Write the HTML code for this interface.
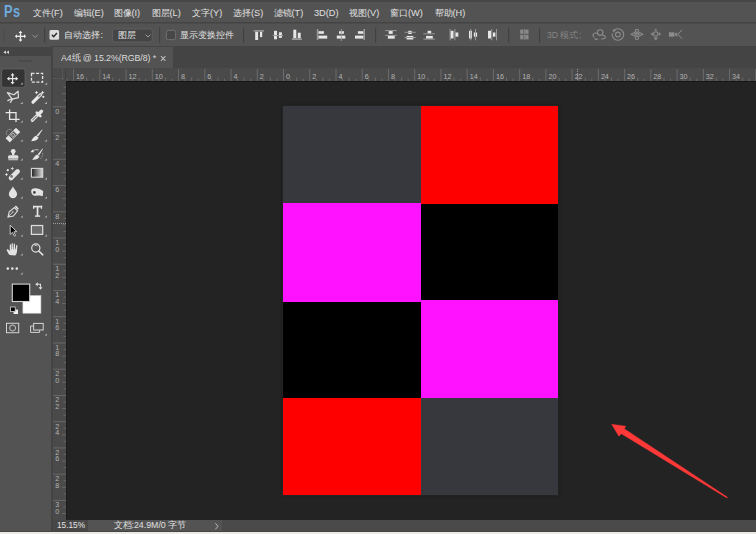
<!DOCTYPE html>
<html><head><meta charset="utf-8">
<style>
html,body{margin:0;padding:0;width:756px;height:534px;overflow:hidden;background:#232323;font-family:"Liberation Sans",sans-serif;}
.a{position:absolute;}
.mi{top:6.5px;font-size:9.2px;line-height:12px;color:#e0e0e0;font-weight:500;white-space:nowrap;}
.ot{top:30px;font-size:8.7px;line-height:11px;color:#e2e2e2;font-weight:500;white-space:nowrap;}
.rl{font-family:"Liberation Sans",sans-serif;font-size:7.2px;fill:#b4b4b4;}
</style></head><body>
<!-- top strip + menu bar -->
<div class="a" style="left:0;top:0;width:756px;height:2px;background:#474747"></div>
<div class="a" style="left:0;top:2px;width:756px;height:20px;background:#535353"></div>
<div class="a" style="left:0;top:22px;width:756px;height:1px;background:#444"></div>
<div class="a" style="left:0;top:23px;width:756px;height:1px;background:#4b4b4b"></div>
<!-- options bar -->
<div class="a" style="left:0;top:24px;width:756px;height:22px;background:#535353"></div>
<div class="a" style="left:0;top:46px;width:756px;height:22px;background:#444"></div>
<!-- tab -->
<div class="a" style="left:53px;top:47px;width:120px;height:21px;background:#535353"></div>
<!-- toolbar panel -->
<div class="a" style="left:0;top:46px;width:51px;height:485px;background:#535353"></div>
<div class="a" style="left:0;top:47px;width:51px;height:9px;background:#444"></div>
<div class="a" style="left:51px;top:46px;width:2px;height:485px;background:#444"></div>
<!-- rulers -->
<div class="a" style="left:53px;top:68px;width:703px;height:13px;background:#4a4a4a"></div>
<div class="a" style="left:53px;top:68px;width:13px;height:452px;background:#4a4a4a"></div>
<svg class="a" style="left:53px;top:69px" width="13" height="12"><path d="M9.5 0 L9.5 11.5 M0 9.5 L12 9.5" stroke="#666" stroke-width="0.8" stroke-dasharray="1 1"/><rect x="12.4" y="0" width="0.6" height="12" fill="#3c3c3c"/></svg>
<svg class="a" style="left:53px;top:69px" width="703" height="12"><rect x="13.52" y="9.7" width="1" height="2.3000000000000007" fill="#6a6a6a"/><rect x="20.08" y="0" width="1" height="12" fill="#6a6a6a"/><text x="23.08" y="9.7" class="rl">16</text><rect x="26.64" y="9.7" width="1" height="2.3000000000000007" fill="#6a6a6a"/><rect x="33.20" y="8.5" width="1" height="3.5" fill="#6a6a6a"/><rect x="39.76" y="9.7" width="1" height="2.3000000000000007" fill="#6a6a6a"/><rect x="46.32" y="0" width="1" height="12" fill="#6a6a6a"/><text x="49.32" y="9.7" class="rl">14</text><rect x="52.88" y="9.7" width="1" height="2.3000000000000007" fill="#6a6a6a"/><rect x="59.44" y="8.5" width="1" height="3.5" fill="#6a6a6a"/><rect x="66.00" y="9.7" width="1" height="2.3000000000000007" fill="#6a6a6a"/><rect x="72.56" y="0" width="1" height="12" fill="#6a6a6a"/><text x="75.56" y="9.7" class="rl">12</text><rect x="79.12" y="9.7" width="1" height="2.3000000000000007" fill="#6a6a6a"/><rect x="85.68" y="8.5" width="1" height="3.5" fill="#6a6a6a"/><rect x="92.24" y="9.7" width="1" height="2.3000000000000007" fill="#6a6a6a"/><rect x="98.80" y="0" width="1" height="12" fill="#6a6a6a"/><text x="101.80" y="9.7" class="rl">10</text><rect x="105.36" y="9.7" width="1" height="2.3000000000000007" fill="#6a6a6a"/><rect x="111.92" y="8.5" width="1" height="3.5" fill="#6a6a6a"/><rect x="118.48" y="9.7" width="1" height="2.3000000000000007" fill="#6a6a6a"/><rect x="125.04" y="0" width="1" height="12" fill="#6a6a6a"/><text x="128.04" y="9.7" class="rl">8</text><rect x="131.60" y="9.7" width="1" height="2.3000000000000007" fill="#6a6a6a"/><rect x="138.16" y="8.5" width="1" height="3.5" fill="#6a6a6a"/><rect x="144.72" y="9.7" width="1" height="2.3000000000000007" fill="#6a6a6a"/><rect x="151.28" y="0" width="1" height="12" fill="#6a6a6a"/><text x="154.28" y="9.7" class="rl">6</text><rect x="157.84" y="9.7" width="1" height="2.3000000000000007" fill="#6a6a6a"/><rect x="164.40" y="8.5" width="1" height="3.5" fill="#6a6a6a"/><rect x="170.96" y="9.7" width="1" height="2.3000000000000007" fill="#6a6a6a"/><rect x="177.52" y="0" width="1" height="12" fill="#6a6a6a"/><text x="180.52" y="9.7" class="rl">4</text><rect x="184.08" y="9.7" width="1" height="2.3000000000000007" fill="#6a6a6a"/><rect x="190.64" y="8.5" width="1" height="3.5" fill="#6a6a6a"/><rect x="197.20" y="9.7" width="1" height="2.3000000000000007" fill="#6a6a6a"/><rect x="203.76" y="0" width="1" height="12" fill="#6a6a6a"/><text x="206.76" y="9.7" class="rl">2</text><rect x="210.32" y="9.7" width="1" height="2.3000000000000007" fill="#6a6a6a"/><rect x="216.88" y="8.5" width="1" height="3.5" fill="#6a6a6a"/><rect x="223.44" y="9.7" width="1" height="2.3000000000000007" fill="#6a6a6a"/><rect x="230.00" y="0" width="1" height="12" fill="#6a6a6a"/><text x="233.00" y="9.7" class="rl">0</text><rect x="236.56" y="9.7" width="1" height="2.3000000000000007" fill="#6a6a6a"/><rect x="243.12" y="8.5" width="1" height="3.5" fill="#6a6a6a"/><rect x="249.68" y="9.7" width="1" height="2.3000000000000007" fill="#6a6a6a"/><rect x="256.24" y="0" width="1" height="12" fill="#6a6a6a"/><text x="259.24" y="9.7" class="rl">2</text><rect x="262.80" y="9.7" width="1" height="2.3000000000000007" fill="#6a6a6a"/><rect x="269.36" y="8.5" width="1" height="3.5" fill="#6a6a6a"/><rect x="275.92" y="9.7" width="1" height="2.3000000000000007" fill="#6a6a6a"/><rect x="282.48" y="0" width="1" height="12" fill="#6a6a6a"/><text x="285.48" y="9.7" class="rl">4</text><rect x="289.04" y="9.7" width="1" height="2.3000000000000007" fill="#6a6a6a"/><rect x="295.60" y="8.5" width="1" height="3.5" fill="#6a6a6a"/><rect x="302.16" y="9.7" width="1" height="2.3000000000000007" fill="#6a6a6a"/><rect x="308.72" y="0" width="1" height="12" fill="#6a6a6a"/><text x="311.72" y="9.7" class="rl">6</text><rect x="315.28" y="9.7" width="1" height="2.3000000000000007" fill="#6a6a6a"/><rect x="321.84" y="8.5" width="1" height="3.5" fill="#6a6a6a"/><rect x="328.40" y="9.7" width="1" height="2.3000000000000007" fill="#6a6a6a"/><rect x="334.96" y="0" width="1" height="12" fill="#6a6a6a"/><text x="337.96" y="9.7" class="rl">8</text><rect x="341.52" y="9.7" width="1" height="2.3000000000000007" fill="#6a6a6a"/><rect x="348.08" y="8.5" width="1" height="3.5" fill="#6a6a6a"/><rect x="354.64" y="9.7" width="1" height="2.3000000000000007" fill="#6a6a6a"/><rect x="361.20" y="0" width="1" height="12" fill="#6a6a6a"/><text x="364.20" y="9.7" class="rl">10</text><rect x="367.76" y="9.7" width="1" height="2.3000000000000007" fill="#6a6a6a"/><rect x="374.32" y="8.5" width="1" height="3.5" fill="#6a6a6a"/><rect x="380.88" y="9.7" width="1" height="2.3000000000000007" fill="#6a6a6a"/><rect x="387.44" y="0" width="1" height="12" fill="#6a6a6a"/><text x="390.44" y="9.7" class="rl">12</text><rect x="394.00" y="9.7" width="1" height="2.3000000000000007" fill="#6a6a6a"/><rect x="400.56" y="8.5" width="1" height="3.5" fill="#6a6a6a"/><rect x="407.12" y="9.7" width="1" height="2.3000000000000007" fill="#6a6a6a"/><rect x="413.68" y="0" width="1" height="12" fill="#6a6a6a"/><text x="416.68" y="9.7" class="rl">14</text><rect x="420.24" y="9.7" width="1" height="2.3000000000000007" fill="#6a6a6a"/><rect x="426.80" y="8.5" width="1" height="3.5" fill="#6a6a6a"/><rect x="433.36" y="9.7" width="1" height="2.3000000000000007" fill="#6a6a6a"/><rect x="439.92" y="0" width="1" height="12" fill="#6a6a6a"/><text x="442.92" y="9.7" class="rl">16</text><rect x="446.48" y="9.7" width="1" height="2.3000000000000007" fill="#6a6a6a"/><rect x="453.04" y="8.5" width="1" height="3.5" fill="#6a6a6a"/><rect x="459.60" y="9.7" width="1" height="2.3000000000000007" fill="#6a6a6a"/><rect x="466.16" y="0" width="1" height="12" fill="#6a6a6a"/><text x="469.16" y="9.7" class="rl">18</text><rect x="472.72" y="9.7" width="1" height="2.3000000000000007" fill="#6a6a6a"/><rect x="479.28" y="8.5" width="1" height="3.5" fill="#6a6a6a"/><rect x="485.84" y="9.7" width="1" height="2.3000000000000007" fill="#6a6a6a"/><rect x="492.40" y="0" width="1" height="12" fill="#6a6a6a"/><text x="495.40" y="9.7" class="rl">20</text><rect x="498.96" y="9.7" width="1" height="2.3000000000000007" fill="#6a6a6a"/><rect x="505.52" y="8.5" width="1" height="3.5" fill="#6a6a6a"/><rect x="512.08" y="9.7" width="1" height="2.3000000000000007" fill="#6a6a6a"/><rect x="518.64" y="0" width="1" height="12" fill="#6a6a6a"/><text x="521.64" y="9.7" class="rl">22</text><rect x="525.20" y="9.7" width="1" height="2.3000000000000007" fill="#6a6a6a"/><rect x="531.76" y="8.5" width="1" height="3.5" fill="#6a6a6a"/><rect x="538.32" y="9.7" width="1" height="2.3000000000000007" fill="#6a6a6a"/><rect x="544.88" y="0" width="1" height="12" fill="#6a6a6a"/><text x="547.88" y="9.7" class="rl">24</text><rect x="551.44" y="9.7" width="1" height="2.3000000000000007" fill="#6a6a6a"/><rect x="558.00" y="8.5" width="1" height="3.5" fill="#6a6a6a"/><rect x="564.56" y="9.7" width="1" height="2.3000000000000007" fill="#6a6a6a"/><rect x="571.12" y="0" width="1" height="12" fill="#6a6a6a"/><text x="574.12" y="9.7" class="rl">26</text><rect x="577.68" y="9.7" width="1" height="2.3000000000000007" fill="#6a6a6a"/><rect x="584.24" y="8.5" width="1" height="3.5" fill="#6a6a6a"/><rect x="590.80" y="9.7" width="1" height="2.3000000000000007" fill="#6a6a6a"/><rect x="597.36" y="0" width="1" height="12" fill="#6a6a6a"/><text x="600.36" y="9.7" class="rl">28</text><rect x="603.92" y="9.7" width="1" height="2.3000000000000007" fill="#6a6a6a"/><rect x="610.48" y="8.5" width="1" height="3.5" fill="#6a6a6a"/><rect x="617.04" y="9.7" width="1" height="2.3000000000000007" fill="#6a6a6a"/><rect x="623.60" y="0" width="1" height="12" fill="#6a6a6a"/><text x="626.60" y="9.7" class="rl">30</text><rect x="630.16" y="9.7" width="1" height="2.3000000000000007" fill="#6a6a6a"/><rect x="636.72" y="8.5" width="1" height="3.5" fill="#6a6a6a"/><rect x="643.28" y="9.7" width="1" height="2.3000000000000007" fill="#6a6a6a"/><rect x="649.84" y="0" width="1" height="12" fill="#6a6a6a"/><text x="652.84" y="9.7" class="rl">32</text><rect x="656.40" y="9.7" width="1" height="2.3000000000000007" fill="#6a6a6a"/><rect x="662.96" y="8.5" width="1" height="3.5" fill="#6a6a6a"/><rect x="669.52" y="9.7" width="1" height="2.3000000000000007" fill="#6a6a6a"/><rect x="676.08" y="0" width="1" height="12" fill="#6a6a6a"/><text x="679.08" y="9.7" class="rl">34</text><rect x="682.64" y="9.7" width="1" height="2.3000000000000007" fill="#6a6a6a"/><rect x="689.20" y="8.5" width="1" height="3.5" fill="#6a6a6a"/><rect x="695.76" y="9.7" width="1" height="2.3000000000000007" fill="#6a6a6a"/><rect x="702.32" y="0" width="1" height="12" fill="#6a6a6a"/><text x="705.32" y="9.7" class="rl">36</text></svg>
<svg class="a" style="left:53px;top:68px" width="13" height="451"><rect x="10.5" y="18.62" width="2.5" height="1" fill="#686868"/><rect x="9" y="25.18" width="4" height="1" fill="#686868"/><rect x="10.5" y="31.74" width="2.5" height="1" fill="#686868"/><rect x="0" y="38.30" width="13" height="1" fill="#686868"/><text x="2.2" y="45.70" class="rl">0</text><rect x="10.5" y="44.86" width="2.5" height="1" fill="#686868"/><rect x="9" y="51.42" width="4" height="1" fill="#686868"/><rect x="10.5" y="57.98" width="2.5" height="1" fill="#686868"/><rect x="0" y="64.54" width="13" height="1" fill="#686868"/><text x="2.2" y="71.94" class="rl">2</text><rect x="10.5" y="71.10" width="2.5" height="1" fill="#686868"/><rect x="9" y="77.66" width="4" height="1" fill="#686868"/><rect x="10.5" y="84.22" width="2.5" height="1" fill="#686868"/><rect x="0" y="90.78" width="13" height="1" fill="#686868"/><text x="2.2" y="98.18" class="rl">4</text><rect x="10.5" y="97.34" width="2.5" height="1" fill="#686868"/><rect x="9" y="103.90" width="4" height="1" fill="#686868"/><rect x="10.5" y="110.46" width="2.5" height="1" fill="#686868"/><rect x="0" y="117.02" width="13" height="1" fill="#686868"/><text x="2.2" y="124.42" class="rl">6</text><rect x="10.5" y="123.58" width="2.5" height="1" fill="#686868"/><rect x="9" y="130.14" width="4" height="1" fill="#686868"/><rect x="10.5" y="136.70" width="2.5" height="1" fill="#686868"/><rect x="0" y="143.26" width="13" height="1" fill="#686868"/><text x="2.2" y="150.66" class="rl">8</text><rect x="10.5" y="149.82" width="2.5" height="1" fill="#686868"/><rect x="9" y="156.38" width="4" height="1" fill="#686868"/><rect x="10.5" y="162.94" width="2.5" height="1" fill="#686868"/><rect x="0" y="169.50" width="13" height="1" fill="#686868"/><text x="2.2" y="176.90" class="rl">1</text><text x="2.2" y="183.50" class="rl">0</text><rect x="10.5" y="176.06" width="2.5" height="1" fill="#686868"/><rect x="9" y="182.62" width="4" height="1" fill="#686868"/><rect x="10.5" y="189.18" width="2.5" height="1" fill="#686868"/><rect x="0" y="195.74" width="13" height="1" fill="#686868"/><text x="2.2" y="203.14" class="rl">1</text><text x="2.2" y="209.74" class="rl">2</text><rect x="10.5" y="202.30" width="2.5" height="1" fill="#686868"/><rect x="9" y="208.86" width="4" height="1" fill="#686868"/><rect x="10.5" y="215.42" width="2.5" height="1" fill="#686868"/><rect x="0" y="221.98" width="13" height="1" fill="#686868"/><text x="2.2" y="229.38" class="rl">1</text><text x="2.2" y="235.98" class="rl">4</text><rect x="10.5" y="228.54" width="2.5" height="1" fill="#686868"/><rect x="9" y="235.10" width="4" height="1" fill="#686868"/><rect x="10.5" y="241.66" width="2.5" height="1" fill="#686868"/><rect x="0" y="248.22" width="13" height="1" fill="#686868"/><text x="2.2" y="255.62" class="rl">1</text><text x="2.2" y="262.22" class="rl">6</text><rect x="10.5" y="254.78" width="2.5" height="1" fill="#686868"/><rect x="9" y="261.34" width="4" height="1" fill="#686868"/><rect x="10.5" y="267.90" width="2.5" height="1" fill="#686868"/><rect x="0" y="274.46" width="13" height="1" fill="#686868"/><text x="2.2" y="281.86" class="rl">1</text><text x="2.2" y="288.46" class="rl">8</text><rect x="10.5" y="281.02" width="2.5" height="1" fill="#686868"/><rect x="9" y="287.58" width="4" height="1" fill="#686868"/><rect x="10.5" y="294.14" width="2.5" height="1" fill="#686868"/><rect x="0" y="300.70" width="13" height="1" fill="#686868"/><text x="2.2" y="308.10" class="rl">2</text><text x="2.2" y="314.70" class="rl">0</text><rect x="10.5" y="307.26" width="2.5" height="1" fill="#686868"/><rect x="9" y="313.82" width="4" height="1" fill="#686868"/><rect x="10.5" y="320.38" width="2.5" height="1" fill="#686868"/><rect x="0" y="326.94" width="13" height="1" fill="#686868"/><text x="2.2" y="334.34" class="rl">2</text><text x="2.2" y="340.94" class="rl">2</text><rect x="10.5" y="333.50" width="2.5" height="1" fill="#686868"/><rect x="9" y="340.06" width="4" height="1" fill="#686868"/><rect x="10.5" y="346.62" width="2.5" height="1" fill="#686868"/><rect x="0" y="353.18" width="13" height="1" fill="#686868"/><text x="2.2" y="360.58" class="rl">2</text><text x="2.2" y="367.18" class="rl">4</text><rect x="10.5" y="359.74" width="2.5" height="1" fill="#686868"/><rect x="9" y="366.30" width="4" height="1" fill="#686868"/><rect x="10.5" y="372.86" width="2.5" height="1" fill="#686868"/><rect x="0" y="379.42" width="13" height="1" fill="#686868"/><text x="2.2" y="386.82" class="rl">2</text><text x="2.2" y="393.42" class="rl">6</text><rect x="10.5" y="385.98" width="2.5" height="1" fill="#686868"/><rect x="9" y="392.54" width="4" height="1" fill="#686868"/><rect x="10.5" y="399.10" width="2.5" height="1" fill="#686868"/><rect x="0" y="405.66" width="13" height="1" fill="#686868"/><text x="2.2" y="413.06" class="rl">2</text><text x="2.2" y="419.66" class="rl">8</text><rect x="10.5" y="412.22" width="2.5" height="1" fill="#686868"/><rect x="9" y="418.78" width="4" height="1" fill="#686868"/><rect x="10.5" y="425.34" width="2.5" height="1" fill="#686868"/><rect x="0" y="431.90" width="13" height="1" fill="#686868"/><text x="2.2" y="439.30" class="rl">3</text><text x="2.2" y="445.90" class="rl">0</text><rect x="10.5" y="438.46" width="2.5" height="1" fill="#686868"/><rect x="9" y="445.02" width="4" height="1" fill="#686868"/></svg>
<svg class="a" style="left:576px;top:69px" width="3" height="12"><path d="M1.5 0 L1.5 13" stroke="#a8a8c0" stroke-width="0.8" stroke-dasharray="1 1"/></svg>
<svg class="a" style="left:53px;top:222px" width="13" height="3"><path d="M0 1.5 L13 1.5" stroke="#b4b4b4" stroke-width="0.8" stroke-dasharray="1 1"/></svg>
<!-- canvas -->
<div class="a" style="left:66px;top:81px;width:690px;height:438px;background:#232323"></div>
<div class="a" style="left:66px;top:81px;width:690px;height:1px;background:#161616"></div>
<div class="a" style="left:66px;top:81px;width:1px;height:438px;background:#1c1c1c"></div>
<!-- document -->
<div class="a" style="left:282px;top:105px;width:277px;height:391px;box-shadow:0 0 2px #1a1a1a"></div>
<div class="a" style="left:283px;top:106px;width:138px;height:97px;background:#37383d"></div>
<div class="a" style="left:283px;top:203px;width:138px;height:99px;background:#ff12ff"></div>
<div class="a" style="left:283px;top:302px;width:138px;height:96px;background:#000"></div>
<div class="a" style="left:283px;top:398px;width:138px;height:97px;background:#ff0000"></div>
<div class="a" style="left:421px;top:106px;width:137px;height:98px;background:#ff0000"></div>
<div class="a" style="left:421px;top:204px;width:137px;height:96px;background:#000"></div>
<div class="a" style="left:421px;top:300px;width:137px;height:98px;background:#ff12ff"></div>
<div class="a" style="left:421px;top:398px;width:137px;height:97px;background:#37383d"></div>
<svg class="a" style="left:0;top:0" width="756" height="534"><path d="M611.6 424.3 L625.8 426.2 L624.3 428.8 L727.5 497.2 L726.9 498.0 L621.3 433.7 L618.9 436.2Z" fill="#ff3838" stroke="#ff3838" stroke-width="0.4" stroke-linejoin="round"/></svg>
<!-- status bar -->
<div class="a" style="left:53px;top:519.5px;width:703px;height:11.5px;background:#4a4a4a"></div>
<div class="a" style="left:88px;top:519.5px;width:134px;height:11.5px;background:#535353"></div>
<div class="a" style="left:53px;top:519.5px;width:35px;height:11.5px;background:#474747"></div>
<div class="a" style="left:56.5px;top:519px;font-size:9.5px;line-height:12px;color:#e4e4e4;transform:scaleX(0.87);transform-origin:0 0;white-space:nowrap">15.15%</div>
<div class="a" style="left:113.5px;top:519.5px;font-size:8.8px;line-height:11px;color:#e0e0e0;font-weight:500;white-space:nowrap">文档:24.9M/0 字节</div>
<svg class="a" style="left:213px;top:520px" width="8" height="10"><path d="M2.4 3.3 L5 6.3 L2.4 9.3" fill="none" stroke="#bdbdbd" stroke-width="1"/></svg>
<div class="a" style="left:60.5px;top:51px;font-size:9.8px;letter-spacing:-0.1px;transform:scaleX(0.9);transform-origin:0 0;line-height:13px;color:#dcdcdc;white-space:nowrap">A4纸 @ 15.2%(RGB/8) *</div>
<svg class="a" style="left:159px;top:54px" width="9" height="9"><path d="M2 2.2 L6.4 6.8 M6.4 2.2 L2 6.8" fill="none" stroke="#bcbcbc" stroke-width="1.1"/></svg>
<div class="a" style="left:0;top:531px;width:756px;height:1px;background:#444"></div>
<div class="a" style="left:0;top:532px;width:756px;height:2px;background:#ecebe6"></div>

<!-- toolbar -->
<svg class="a" style="left:0;top:0" width="52" height="345">
 <!-- header collapse -->
 <path d="M6 50.6 L3.3 52.3 L6 54 Z M9 50.6 L6.3 52.3 L9 54 Z" fill="#d0d0d0"/>
 <path d="M18 60.8 L32.6 60.8" stroke="#464646" stroke-width="1.8" stroke-dasharray="1.6 0.8"/>
 <!-- selected -->
 <rect x="1.4" y="68.4" width="24" height="19.4" rx="2.4" fill="none" stroke="#5c5c5c" stroke-width="0.9"/><rect x="2.2" y="69.4" width="22.2" height="17.4" rx="1.6" fill="#343434"/>
 <!-- triangles -->
 <g fill="#b0b0b0">
  <path d="M22.8 82.6 L22.8 84.6 L20.3 84.6Z"/><path d="M47.2 82.5 L47.2 84.7 L44.7 84.7Z"/>
  <path d="M22.8 101.8 L22.8 104 L20.3 104Z"/><path d="M47 101.8 L47 104 L44.5 104Z"/>
  <path d="M22.8 120.5 L22.8 122.6 L20.3 122.6Z"/><path d="M47 120.5 L47 122.6 L44.5 122.6Z"/>
  <path d="M22.8 139.5 L22.8 141.6 L20.3 141.6Z"/><path d="M47 139.5 L47 141.6 L44.5 141.6Z"/>
  <path d="M22.8 158.5 L22.8 160.6 L20.3 160.6Z"/><path d="M47 158.5 L47 160.6 L44.5 160.6Z"/>
  <path d="M22.8 177.5 L22.8 179.6 L20.3 179.6Z"/><path d="M47 177.5 L47 179.6 L44.5 179.6Z"/>
  <path d="M22.8 196.5 L22.8 198.6 L20.3 198.6Z"/><path d="M47 196.5 L47 198.6 L44.5 198.6Z"/>
  <path d="M22.8 215.5 L22.8 217.6 L20.3 217.6Z"/><path d="M47 215.5 L47 217.6 L44.5 217.6Z"/>
  <path d="M22.8 234.5 L22.8 236.6 L20.3 236.6Z"/><path d="M47 234.5 L47 236.6 L44.5 236.6Z"/>
  <path d="M22.8 253.5 L22.8 255.6 L20.3 255.6Z"/>
  <path d="M22.8 272.5 L22.8 274.6 L20.3 274.6Z"/>
  <path d="M47 333.5 L47 335.6 L44.5 335.6Z"/>
 </g>
  <!-- move -->
 <g fill="#e8e8e8">
  <rect x="8.8" y="78.05" width="7.5" height="1.2"/><rect x="11.95" y="74.9" width="1.2" height="7.5"/>
  <path d="M12.55 72.9 L14.6 75.4 L10.5 75.4Z M12.55 84.4 L14.6 81.9 L10.5 81.9Z M6.9 78.65 L9.4 76.6 L9.4 80.7Z M18.2 78.65 L15.7 76.6 L15.7 80.7Z"/>
 </g>
 <!-- marquee -->
 <rect x="31.5" y="73.4" width="11.1" height="8.7" fill="none" stroke="#e6e6e6" stroke-width="1.3" stroke-dasharray="3 1.6"/>
 <!-- lasso polygonal -->
 <g fill="none" stroke="#e0e0e0" stroke-width="1.2" stroke-linejoin="round" stroke-linecap="round">
  <path d="M7.4 92.6 L14 94.8 L18.1 91.2 L18.4 97.6 L12.2 99.2 Z"/>
  <path d="M11.8 98.8 L7.8 100.6 M12.4 99.2 L10.4 102.4"/>
 </g>
 <!-- magic wand -->
 <g>
  <path d="M33 102.2 L40.6 94.6" stroke="#e8e8e8" stroke-width="3.2" stroke-linecap="round"/>
  <path d="M38.8 96.4 L40.4 94.8" stroke="#6a6a6a" stroke-width="1.1" stroke-linecap="round"/>
  <g fill="#e8e8e8">
   <path d="M36.5 90.8 L37.2 92.1 L38.5 92.6 L37.2 93.1 L36.5 94.4 L35.8 93.1 L34.5 92.6 L35.8 92.1Z"/>
   <path d="M42.6 90.8 L43.3 92.1 L44.6 92.6 L43.3 93.1 L42.6 94.4 L41.9 93.1 L40.6 92.6 L41.9 92.1Z"/>
   <circle cx="43.3" cy="96.8" r="1.1"/>
  </g>
 </g>
 <!-- crop -->
 <g fill="none" stroke="#e8e8e8" stroke-width="1.3">
  <path d="M9.6 109.6 L9.6 119.4 L19.6 119.4"/>
  <path d="M5.6 112.6 L16 112.6 L16 122"/>
 </g>
 <!-- eyedropper -->
 <g>
  <path d="M32.3 120.3 L37.2 115.4" stroke="#e6e6e6" stroke-width="3.1" stroke-linecap="round"/>
  <path d="M32.4 120.2 L36.8 115.8" stroke="#575757" stroke-width="1" stroke-linecap="round"/>
  <path d="M36.8 112.6 L40.4 116.2" stroke="#e6e6e6" stroke-width="2.6" stroke-linecap="round"/>
  <path d="M38.4 114.4 L41.4 111.4" stroke="#e6e6e6" stroke-width="3.4" stroke-linecap="round"/>
 </g>
 <!-- healing -->
 <g transform="rotate(-45 12.9 135.1)">
  <rect x="5.5" y="132.1" width="3.9" height="6" rx="0.6" fill="#e4e4e4"/>
  <rect x="16.4" y="132.1" width="3.9" height="6" rx="0.6" fill="#e4e4e4"/>
  <rect x="9.4" y="132.5" width="7" height="5.2" fill="none" stroke="#dadada" stroke-width="0.8"/>
  <rect x="11.3" y="133.5" width="3.2" height="3.2" fill="none" stroke="#d4d4d4" stroke-width="0.8"/>
  <circle cx="12.9" cy="135.1" r="0.5" fill="#d4d4d4"/>
 </g>
 <path d="M6.8 134.8 A3.7 3.7 0 0 1 11.8 129.8" fill="none" stroke="#c8c8c8" stroke-width="0.8" stroke-dasharray="0.9 0.7"/>
 <!-- brush -->
 <g fill="#e6e6e6">
  <path d="M42.1 129.6 L42.5 130.1 L38.1 136.5 L36.7 135.3 Z"/>
  <path d="M36.2 135.4 L38.4 137.6 C38.2 139.6 35.6 141.4 31.2 141.2 C32 139.4 33.2 136.6 36.2 135.4Z"/>
 </g>
 <!-- stamp -->
 <g fill="#e0e0e0">
  <circle cx="13.2" cy="151.3" r="2.4"/>
  <rect x="12" y="152.5" width="2.4" height="3"/>
  <path d="M9.4 155.2 L17 155.2 Q18.4 155.4 18.4 157 L18.4 158.4 L8 158.4 L8 157 Q8 155.4 9.4 155.2Z"/>
  <rect x="8.4" y="158.4" width="9.6" height="1.9" fill="#bababa"/>
 </g>
 <!-- history brush -->
 <g>
  <path d="M42.6 148.6 L43 149.1 L39.1 155.5 L37.7 154.3 Z" fill="#e4e4e4"/>
  <path d="M37.4 154.6 L39.4 156.6 C38.6 158.6 36.8 159.8 32.2 160 C33.6 158.4 34.4 155.8 37.4 154.6Z" fill="#e4e4e4"/>
  <path d="M30.4 152.2 L32.6 149.6 L34.2 152.2Z" fill="#e4e4e4"/>
  <path d="M33 150.6 Q36 148.8 38.6 150" fill="none" stroke="#c8c8c8" stroke-width="0.9"/>
  <path d="M42.6 153 Q43 156.6 40.4 159" fill="none" stroke="#b8b8b8" stroke-width="0.8" stroke-dasharray="1 0.8"/>
 </g>
 <!-- eraser -->
 <g>
  <path d="M11 178 L17.6 171.4" stroke="#e2e2e2" stroke-width="4.6" stroke-linecap="round"/>
  <circle cx="11.6" cy="176.4" r="1.3" fill="#6a6a6a"/>
  <g fill="#e2e2e2">
   <path d="M12.3 166.8 L12.9 168.1 L14.2 168.6 L12.9 169.1 L12.3 170.4 L11.7 169.1 L10.4 168.6 L11.7 168.1Z"/>
   <circle cx="7.8" cy="170.2" r="1.1"/>
   <path d="M6.5 172.8 L7.1 174.1 L8.4 174.6 L7.1 175.1 L6.5 176.4 L5.9 175.1 L4.6 174.6 L5.9 174.1Z"/>
  </g>
 </g>
 <!-- gradient -->
 <defs><linearGradient id="gr" x1="0" x2="1" y1="0" y2="0"><stop offset="0" stop-color="#1e1e1e"/><stop offset="1" stop-color="#dadada"/></linearGradient></defs>
 <rect x="31.4" y="168.4" width="11.3" height="8.8" fill="url(#gr)" stroke="#d8d8d8" stroke-width="1.1"/>
 <!-- blur drop -->
 <path d="M12.9 186.4 C14.5 189.5 17.1 191.6 17.1 194 A4.15 4.15 0 0 1 8.8 194 C8.8 191.6 11.3 189.5 12.9 186.4Z" fill="#e2e2e2"/>
 <!-- dodge -->
 <g>
  <path d="M31.2 190.6 C31.6 188.4 34.6 187.8 37.4 188.6 C40 189.4 42.6 190.2 43.2 191.2 L42.8 195.8 L41.8 196.2 C40.6 195 38.6 195.6 36.2 195.8 C33.2 196 31 194.4 31.2 190.6Z" fill="#e2e2e2"/>
  <circle cx="34.4" cy="192.4" r="1.3" fill="#3a3a3a"/>
 </g>
 <!-- pen -->
 <g>
  <path d="M8 217 L9.2 211.8 L14.4 207.6 L17.6 210.8 L13.4 216 Z" fill="none" stroke="#e2e2e2" stroke-width="1.1"/>
  <path d="M14.6 206.6 L16 205.6 L18.8 208.4 L17.8 209.8Z" fill="#e2e2e2"/>
  <path d="M8 217 L12.4 212.4" stroke="#e2e2e2" stroke-width="0.8"/>
  <circle cx="12.8" cy="212" r="0.8" fill="#e2e2e2"/>
 </g>
 <!-- type -->
 <g fill="#e6e6e6">
  <rect x="33" y="205.8" width="9.1" height="1.6"/>
  <rect x="33" y="205.8" width="1.3" height="3"/><rect x="40.8" y="205.8" width="1.3" height="3"/>
  <rect x="36.7" y="206.6" width="1.7" height="9.5"/>
  <rect x="35" y="215.4" width="5.1" height="1.4"/>
 </g>
 <!-- path select -->
 <path d="M10.2 225.2 L10.2 234.4 L12.4 232.4 L14.4 236.2 L15.6 235.6 L13.8 231.8 L16.8 231.6 Z" fill="#000" stroke="#d8d8d8" stroke-width="0.9" stroke-linejoin="round"/>
 <!-- rectangle -->
 <rect x="31.4" y="225.5" width="11.3" height="8.9" fill="#6c6c6c" stroke="#dedede" stroke-width="1.2"/>
 <!-- hand -->
 <path d="M9.6 255 C8.4 253.6 7.4 251.6 6.8 250.4 C6.4 249.6 7.4 249 8.2 249.6 L9.8 251 L9.8 244.8 C9.8 244 11 244 11 244.8 L11 249.4 L11.4 249.4 L11.6 243.6 C11.6 242.8 12.8 242.8 12.8 243.6 L13 249.4 L13.4 249.4 L13.8 244 C13.8 243.2 15 243.2 15 244 L15 249.6 L15.4 249.6 L16.2 245.4 C16.4 244.6 17.6 244.8 17.4 245.6 L17 251.4 C16.8 253.4 16 254.6 15.2 255.4 Z" fill="#e2e2e2"/>
 <!-- zoom -->
 <g fill="none" stroke="#e2e2e2">
  <circle cx="35.8" cy="248" r="4.1" stroke-width="1.2"/>
  <path d="M38.8 251 L42.8 254.8" stroke-width="1.6" stroke-linecap="round"/>
  <path d="M34.6 245.6 A2.4 2.4 0 0 1 37.4 246.2" stroke-width="0.8"/>
 </g>
 <!-- more -->
 <g fill="#e0e0e0"><circle cx="7.8" cy="268.6" r="1.3"/><circle cx="12.3" cy="268.6" r="1.3"/><circle cx="16.8" cy="268.6" r="1.3"/></g>
 <!-- colors -->
 <rect x="22.9" y="295.6" width="18" height="17.6" fill="#fff" stroke="#d0d0d0" stroke-width="0.6"/>
 <rect x="12.3" y="284.1" width="17.4" height="17.4" fill="#000" stroke="#d4d4d4" stroke-width="1.1"/>
 <path d="M37.2 284.2 L40.5 284.2 L40.5 287.4" fill="none" stroke="#dcdcdc" stroke-width="1.1"/><path d="M35.2 284.2 L37.8 282.2 L37.8 286.2Z M40.5 289.8 L38.5 287.2 L42.5 287.2Z" fill="#e0e0e0"/>
 <rect x="13.6" y="309.6" width="4.4" height="4.4" fill="#f0f0f0"/>
 <rect x="10.6" y="307" width="4.6" height="4.6" fill="#000" stroke="#d8d8d8" stroke-width="0.8"/>
 <!-- quick mask -->
 <rect x="6.5" y="323.3" width="12.2" height="9.4" fill="none" stroke="#d4d4d4" stroke-width="1"/>
 <circle cx="12.6" cy="328" r="3" fill="none" stroke="#cfcfcf" stroke-width="0.9"/>
 <!-- screen mode -->
 <rect x="33.6" y="323.4" width="9.6" height="6.6" fill="#535353" stroke="#d4d4d4" stroke-width="1"/>
 <path d="M33.2 326 L30.6 326 L30.6 332.4 L39.6 332.4 L39.6 330.2" fill="none" stroke="#d4d4d4" stroke-width="1"/>
</svg>
<!-- menu -->
<div class="a" style="left:4.2px;top:2.9px;font-size:16px;font-weight:bold;color:#6eaadf;line-height:17px;transform:scaleX(0.8);transform-origin:0 0;letter-spacing:0.6px">Ps</div>
<div class="a mi" style="left:33px">文件(F)</div><div class="a mi" style="left:73.5px">编辑(E)</div><div class="a mi" style="left:113.5px">图像(I)</div><div class="a mi" style="left:151.5px">图层(L)</div><div class="a mi" style="left:192px">文字(Y)</div><div class="a mi" style="left:233px">选择(S)</div><div class="a mi" style="left:273.5px">滤镜(T)</div><div class="a mi" style="left:314px">3D(D)</div><div class="a mi" style="left:349px">视图(V)</div><div class="a mi" style="left:390px">窗口(W)</div><div class="a mi" style="left:434.5px">帮助(H)</div>

<!-- options bar items -->
<svg class="a" style="left:0;top:24px" width="756" height="22">
 <path d="M3.8 4.2 L3.8 18.2" stroke="#464646" stroke-width="1.2" stroke-dasharray="1 1"/>
 <g fill="#414141"><rect x="44" y="3.5" width="1.2" height="15.5"/><rect x="159" y="3.5" width="1.2" height="15.5"/><rect x="243" y="3.5" width="1.2" height="15.5"/><rect x="375" y="3.5" width="1.2" height="15.5"/><rect x="508" y="3.5" width="1.2" height="15.5"/><rect x="539" y="3.5" width="1.2" height="15.5"/></g>
 <!-- move icon -->
 <g fill="#ececec">
  <rect x="16" y="11.7" width="9" height="1.3"/><rect x="19.85" y="8" width="1.3" height="9"/>
  <path d="M20.5 6.8 L22.5 9 L18.5 9Z M20.5 17.8 L22.5 15.6 L18.5 15.6Z M14.8 12.35 L17 10.35 L17 14.35Z M26.2 12.35 L24 10.35 L24 14.35Z"/>
 </g>
 <path d="M32.5 10.8 L35.2 13.5 L37.9 10.8" fill="none" stroke="#a0a0a0" stroke-width="0.9"/>
 <!-- checkbox checked -->
 <rect x="49.5" y="6" width="9.6" height="9.8" rx="1.6" fill="#dedede"/>
 <path d="M51.9 10.9 L53.7 12.7 L56.9 9" fill="none" stroke="#2b2b2b" stroke-width="1.5"/>
 <!-- dropdown -->
 <rect x="112.6" y="5" width="39.6" height="13" rx="2" fill="#454545" stroke="#5f5f5f" stroke-width="1"/>
 <path d="M145.6 10.6 L148 13 L150.4 10.6" fill="none" stroke="#a8a8a8" stroke-width="0.9"/>
 <!-- checkbox unchecked -->
 <rect x="166.4" y="6.4" width="9.2" height="9.2" rx="1.8" fill="#474747" stroke="#707070" stroke-width="1"/>
 <!-- align icons -->
 <g fill="#e6e6e6">
  <rect x="255.2" y="7.6" width="2.9" height="8.4"/><rect x="260" y="7.6" width="2.2" height="5.5"/>
  <rect x="274" y="6.8" width="3" height="8.5"/><rect x="278.9" y="8.3" width="3" height="5.6"/>
  <rect x="293.3" y="5.7" width="3" height="8.5"/><rect x="297.8" y="8.7" width="2.9" height="5.5"/>
  <rect x="318.3" y="7.2" width="5.6" height="2.6"/><rect x="318.3" y="11.6" width="8.9" height="3"/>
  <rect x="339" y="7.2" width="4.9" height="2.6"/><rect x="336.8" y="11.6" width="8.5" height="3"/>
  <rect x="357.9" y="7.2" width="5.6" height="2.6"/><rect x="355" y="11.6" width="8.5" height="3"/>
  <rect x="388.7" y="6.9" width="4" height="3"/><rect x="387.9" y="11.4" width="6.8" height="3.3"/>
  <rect x="408.2" y="6.8" width="3.5" height="3.2"/><rect x="406.6" y="11.9" width="6.7" height="3.6"/>
  <rect x="427.6" y="6.8" width="3.6" height="2.7"/><rect x="426" y="11.9" width="6.8" height="2.8"/>
  <rect x="450.5" y="6.8" width="3" height="7.7"/><rect x="455.3" y="8.5" width="3" height="4.2"/>
  <rect x="469" y="6.8" width="3" height="7.7"/><rect x="473.8" y="8.5" width="3.3" height="4.2"/>
  <rect x="488" y="6.8" width="3" height="7.7"/><rect x="492.8" y="8.5" width="2.6" height="4.2"/>
 </g>
 <g fill="#9a9a9a">
  <rect x="253.7" y="6.1" width="10.4" height="1.5"/>
  <rect x="272.6" y="11" width="10.4" height="1"/>
  <rect x="291.9" y="14.2" width="10" height="1.8"/>
  <rect x="316.8" y="5" width="1.5" height="11"/>
  <rect x="340.8" y="5" width="1" height="12"/>
  <rect x="363.5" y="5" width="1.5" height="11"/>
  <rect x="385.2" y="6.1" width="11.5" height="1"/><rect x="385.2" y="10.9" width="11.5" height="1"/>
  <rect x="404.6" y="7.8" width="11.1" height="1"/><rect x="404.6" y="13" width="11.1" height="1"/>
  <rect x="423.3" y="9.3" width="11.5" height="1"/><rect x="423.3" y="14.6" width="11.5" height="1"/>
  <rect x="449.6" y="5" width="1" height="11.3"/><rect x="454.4" y="5" width="1" height="11.3"/>
  <rect x="470.3" y="5" width="1" height="11.3"/><rect x="475" y="5" width="1" height="11.3"/>
  <rect x="491.2" y="5" width="1" height="11.3"/><rect x="496" y="5" width="1" height="11.3"/>
 </g>
 <!-- auto align dim -->
 <g fill="#8a8a8a"><rect x="520.2" y="5.6" width="3.3" height="4.2"/><rect x="520.2" y="10.8" width="3.3" height="4.5"/><rect x="525.2" y="5.6" width="3.3" height="4.2"/><rect x="525.2" y="10.8" width="3.3" height="4.5"/><rect x="524" y="5" width="0.8" height="11"/></g>
 <!-- 3d icons dim -->
 <g fill="none" stroke="#8c8c8c" stroke-width="1.1">
  <circle cx="600.2" cy="8.6" r="2.8"/>
  <path d="M597.6 9.4 C594.2 8.2 591.8 10.6 593.4 12.6 L594.6 13.4"/>
  <path d="M602.6 11.2 C605.2 11.8 606.2 13 604.8 14.2 C604 14.9 602.6 15 601.2 15"/>
  <path d="M612.2 9.5 A5.8 5.8 0 1 0 614.6 5.75"/>
  <circle cx="617.9" cy="10.5" r="2.4"/>
  <circle cx="636.9" cy="6.8" r="1.6"/><circle cx="636.9" cy="13.9" r="1.6"/>
  <path d="M635.4 8 L631.2 10.2 L635.4 12.6 M638.4 8 L642.8 10.2 L638.4 12.6"/>
  <ellipse cx="636.9" cy="10.2" rx="2.2" ry="0.9"/>
  <circle cx="655.8" cy="10" r="2.2"/>
  <path d="M682 6 L677.8 10.2 L682 14.8" stroke-width="1"/>
 </g>
 <g fill="#8c8c8c">
  <path d="M594 14.2 L599.2 15 L595.4 16.2Z"/>
  <path d="M612.6 5.6 L616.2 5.8 L613.4 8.8Z"/>
  <path d="M655.8 4.6 L657.4 6.6 L654.2 6.6Z M655.8 16.4 L658.2 13.6 L653.4 13.6Z M650.4 10 L652.8 8.2 L652.8 11.8Z M661.2 10 L658.8 8.2 L658.8 11.8Z"/>
  <rect x="668.9" y="8.3" width="5.5" height="4.4"/><path d="M674.2 10.5 L677.2 8.3 L677.2 12.7Z"/>
 </g>
</svg>
<div class="a ot" style="left:63.6px">自动选择</div>
<div class="a ot" style="left:100.6px">:</div>
<div class="a ot" style="left:117.5px">图层</div>
<div class="a ot" style="left:180px">显示变换控件</div>
<div class="a ot" style="left:547px;color:#858585">3D</div>
<div class="a ot" style="left:559.5px;color:#858585">模式</div>
<div class="a ot" style="left:579px;color:#858585">:</div>
